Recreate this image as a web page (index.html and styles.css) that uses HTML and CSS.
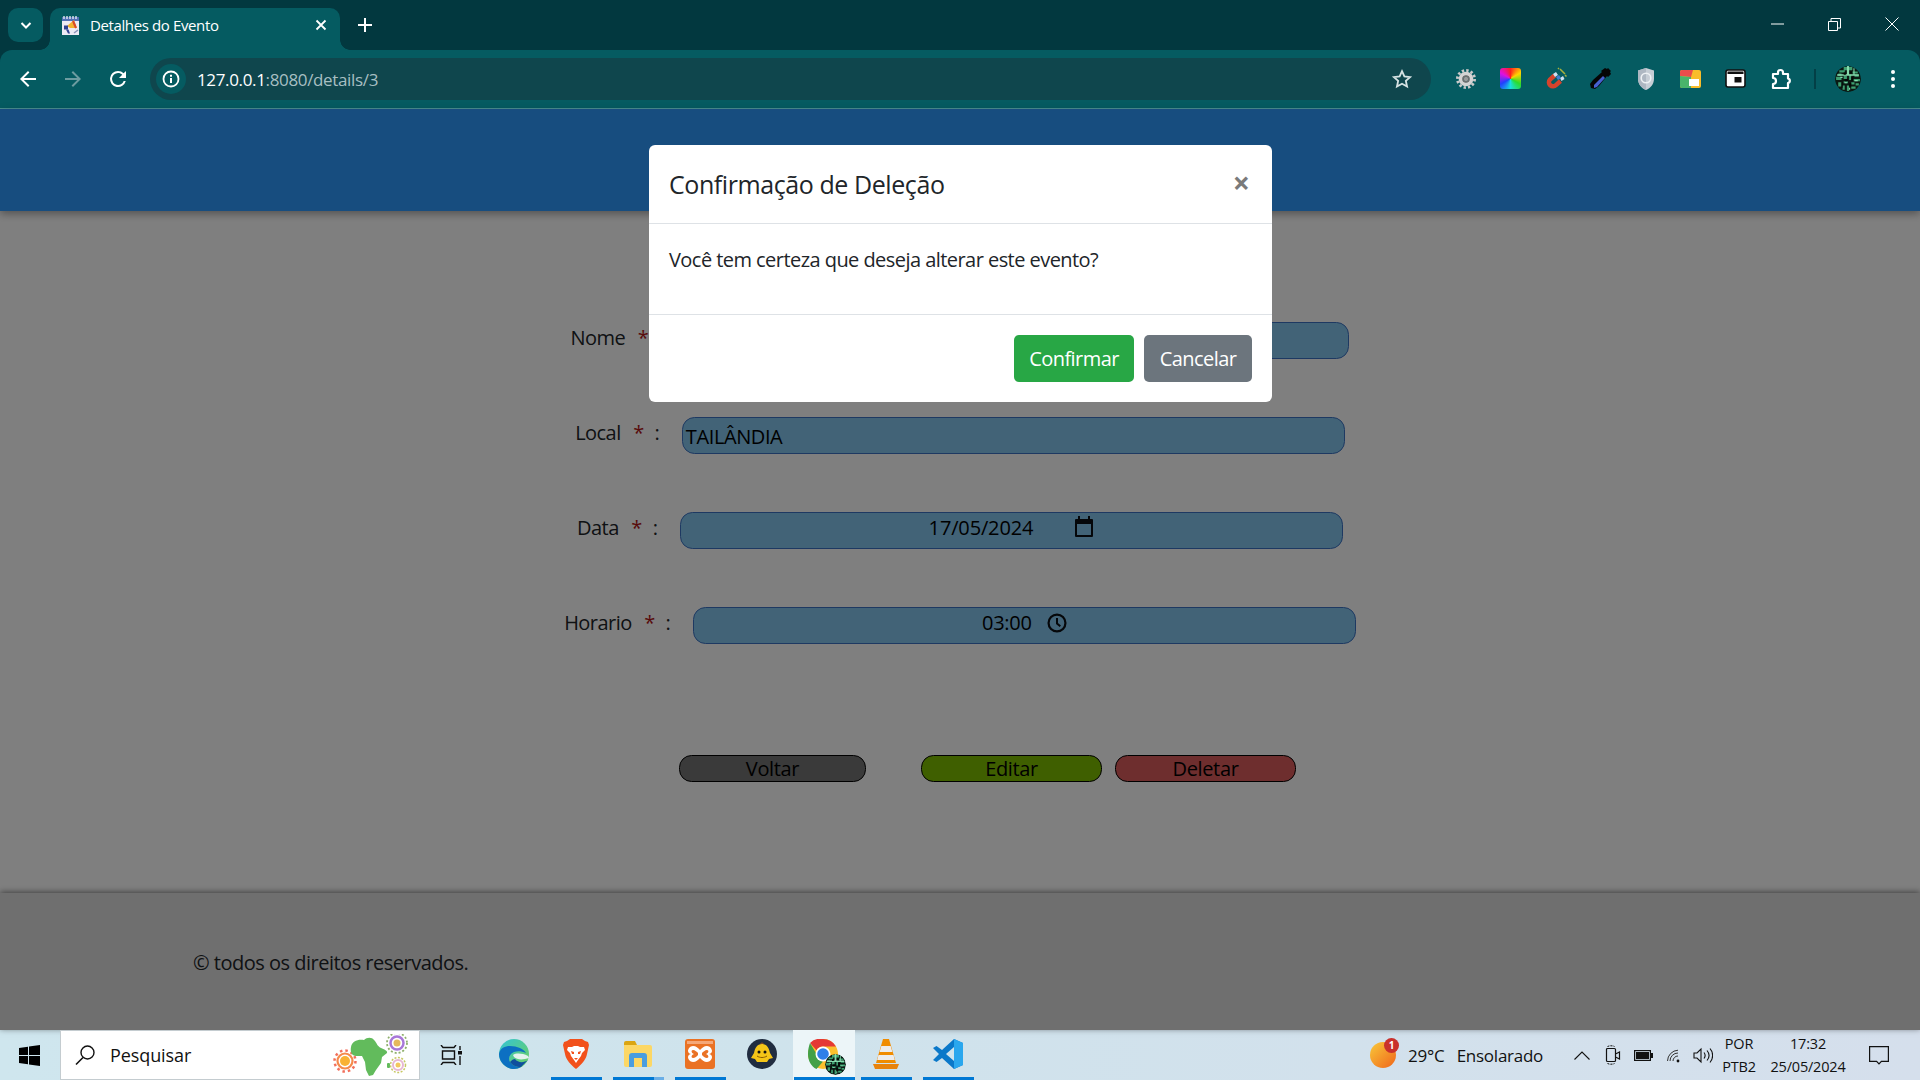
FILE: index.html
```html
<!DOCTYPE html>
<html lang="pt-BR">
<head>
<meta charset="utf-8">
<title>Detalhes do Evento</title>
<link rel="stylesheet" href="styles.css">
</head>
<body>
<svg class="defs" width="0" height="0" aria-hidden="true">
  <symbol id="circuit" viewBox="0 0 24 24">
    <circle cx="12" cy="12" r="12" fill="#0b1a14"/>
    <path d="M8 1h8v3H8zM4 4h5v2H4zM3 7h3v2H3zM16 5h5v2h-5zM1 10h5v3H1zM18 8h4v2h-4zM8 9h3v3H8zM13 8h2v5h-2zM17 12h6v2h-6zM3 15h3v4H3zM8 14h4v2H8zM15 15h3v2h-3zM19 16h3v2h-3zM7 18h2v4H7zM11 18h2v5h-2zM15 19h4v2h-4z" fill="#3e9f70"/>
    <path d="M11 0h2v8h-2zM2 7.500h20v1.500H2zM17 2h1v6h-1zM5 10h2v1H5zM9 15h2v1H9zM18 13h3v1h-3zM13 20h1v2h-1z" fill="#86dcae"/>
    <path d="M8 6h2v2H8zM14 5h2v2h-2zM9 12h3v2H9zM15 10h2v4h-2zM6 15h1v5H6zM13 16h2v3h-2z" fill="#030906"/>
  </symbol>
</svg>
<div class="chrome">
  <div class="strip">
    <div class="tab-list"><svg width="16" height="16" viewBox="0 0 16 16"><path d="M3.500 6 8 10.500 12.500 6" fill="none" stroke="#fff" stroke-width="2"/></svg></div>
    <div class="tab">
      <svg class="favicon" width="20" height="21" viewBox="0 0 20 21">
        <rect x="1" y="3" width="17" height="17" fill="#eceaf4"/>
        <rect x="1" y="2" width="17" height="4" fill="#5270b5"/>
        <path d="M3 1v3M6 1v3M9 1v3M12 1v3M15 1v3" stroke="#fff" stroke-width="1.200"/>
        <path d="M6 11l7-6 3 8-7 0z" fill="#f2b230"/>
        <path d="M12 6l3 7" stroke="#d8482a" stroke-width="2"/>
        <path d="M3 10.500h4v4H3z" fill="#2f4090"/>
        <path d="M5 14.500l2 4h2l-1.500-4z" fill="#2f4090"/>
        <path d="M13 18l4-3" stroke="#8a93b8" stroke-width="1.500"/>
      </svg>
      <span class="tab-title">Detalhes do Evento</span>
      <svg class="tab-close" width="12" height="12" viewBox="0 0 12 12"><path d="M1.500 1.500l9 9M10.500 1.500l-9 9" stroke="#fff" stroke-width="1.800"/></svg>
    </div>
    <svg class="new-tab" width="14" height="14" viewBox="0 0 14 14"><path d="M7 0v14M0 7h14" stroke="#fff" stroke-width="2"/></svg>
    <div class="window-controls">
      <span class="win-btn"><svg width="13" height="2" viewBox="0 0 13 2"><path d="M0 1h13" stroke="#fff"/></svg></span>
      <span class="win-btn"><svg width="13" height="13" viewBox="0 0 13 13"><path d="M.5 3.500h9v9h-9zM3 3.500V.5h9.500V10H9.500" fill="none" stroke="#fff"/></svg></span>
      <span class="win-btn"><svg width="14" height="14" viewBox="0 0 14 14"><path d="M.5.5l13 13M13.500.5l-13 13" stroke="#fff"/></svg></span>
    </div>
  </div>
  <div class="toolbar">
    <span class="nav-btn"><svg width="24" height="24" viewBox="0 0 24 24"><path d="M20 11H7.800l5.600-5.600L12 4l-8 8 8 8 1.400-1.400L7.800 13H20z" fill="#fff"/></svg></span>
    <span class="nav-btn"><svg width="24" height="24" viewBox="0 0 24 24"><path d="M4 11h12.200l-5.600-5.600L12 4l8 8-8 8-1.400-1.400 5.600-5.600H4z" fill="#6d9ca0"/></svg></span>
    <span class="nav-btn"><svg width="24" height="24" viewBox="0 0 24 24"><path d="M17.650 6.350A7.960 7.960 0 0 0 12 4a8 8 0 1 0 7.750 10h-2.080A6 6 0 1 1 12 6c1.660 0 3.140.69 4.220 1.780L13 11h7V4z" fill="#fff"/></svg></span>
    <div class="omnibox">
      <span class="site-info"><svg width="18" height="18" viewBox="0 0 18 18"><circle cx="9" cy="9" r="7.500" fill="none" stroke="#fff" stroke-width="1.800"/><path d="M8 8h2v5H8zM8 4.800h2v2H8z" fill="#fff"/></svg></span>
      <span class="url"><span class="url-host">127.0.0.1</span>:8080/details/3</span>
      <svg class="star" width="22" height="22" viewBox="0 0 24 24"><path d="M12 3.500l2.600 5.700 6.200.7-4.600 4.200 1.300 6.100L12 17.200l-5.500 3 1.300-6.100-4.600-4.200 6.200-.7z" fill="none" stroke="#d5e2e3" stroke-width="2"/></svg>
    </div>
    <div class="extensions">
      <span class="ext"><svg width="20" height="20" viewBox="0 0 20 20"><circle cx="10" cy="10" r="8.600" fill="none" stroke="#c9c9c9" stroke-width="2.800" stroke-dasharray="2.400 2.100"/><circle cx="10" cy="10" r="5.300" fill="none" stroke="#d4d4d4" stroke-width="4"/><circle cx="10" cy="10" r="3" fill="none" stroke="#6f6f6f" stroke-width="1.500"/><circle cx="10" cy="10" r="2.200" fill="#9a9a9a"/></svg></span>
      <span class="ext"><span class="wheel"></span></span>
      <span class="ext"><svg width="22" height="24" viewBox="0 0 22 24"><path d="M9.500 8.500L5 12.500a4 4 0 0 0 6 5.500l4.500-4" fill="none" stroke="#d5432c" stroke-width="4.500"/><path d="M8 7l3-2 2 3-3 2zM15 11l3-2 1.500 3-3 2z" fill="#cfe0f2"/><path d="M11 10l3-2 2 3-3 2z" fill="#3f7fd0"/><path d="M15 2l5 5M13 1l1 1M20 8l1.500 1.500" stroke="#a8b23c" stroke-width="1.500"/></svg></span>
      <span class="ext"><svg width="22" height="24" viewBox="0 0 22 24"><path d="M15 1l2 1 1-1 3 3-1 1 1 2-3 3-1-1-8 10-4 3-4-1-1-4 3-4 9-8-1-1z" fill="#050505"/><path d="M13 9l2 2-8 9-3 1 0-3z" fill="#4660d0"/></svg></span>
      <span class="ext"><svg width="20" height="24" viewBox="0 0 20 24"><path d="M10 1l8 2.500V12c0 5-3.500 9-8 11-4.500-2-8-6-8-11V3.500z" fill="#c7ced6"/><path d="M10 1v22c-4.500-2-8-6-8-11V3.500z" fill="#aeb7c2"/><circle cx="10" cy="11" r="4.800" fill="none" stroke="#eef1f4" stroke-width="1.600"/></svg></span>
      <span class="ext"><svg width="21" height="18" viewBox="0 0 21 18"><rect width="21" height="18" rx="2" fill="#f9bd2a"/><path d="M0 2a2 2 0 0 1 2-2h11l-2 7-11-1z" fill="#ea4c4c"/><path d="M0 6l11 1 0 11H2a2 2 0 0 1-2-2z" fill="#49b36b"/><rect x="9" y="9" width="10" height="7" fill="#fff"/></svg></span>
      <span class="ext"><svg width="21" height="19" viewBox="0 0 21 19"><rect x="1" y="1" width="19" height="17" rx="2" fill="#fff" stroke="#111" stroke-width="1.600"/><rect x="2.500" y="2.500" width="16" height="2.500" fill="#111"/><rect x="9.500" y="8" width="7" height="5.500" fill="#111"/></svg></span>
      <span class="ext puzzle"><svg width="21" height="22" viewBox="0 0 21 22"><path d="M2 6h5V4.500a2.500 2.500 0 0 1 5 0V6h5v4.500a2.300 2.300 0 0 1 0 4.500V20H2v-4a3 3 0 0 0 0-6z" fill="none" stroke="#fff" stroke-width="2.200" stroke-linejoin="round"/></svg></span>
      <span class="toolbar-sep"></span>
      <span class="ext avatar"><svg width="26" height="26"><use href="#circuit"/></svg></span>
      <span class="ext menu"><svg width="6" height="20" viewBox="0 0 6 20"><circle cx="3" cy="3" r="2" fill="#fff"/><circle cx="3" cy="10" r="2" fill="#fff"/><circle cx="3" cy="17" r="2" fill="#fff"/></svg></span>
    </div>
  </div>
</div>

<div class="page">
  <header class="site-header"></header>
  <main class="details">
    <form class="form">
      <div class="row">
        <label class="label">Nome<span class="req">*</span><span class="colon">:</span></label>
        <div class="field"></div>
      </div>
      <div class="row">
        <label class="label">Local<span class="req">*</span><span class="colon">:</span></label>
        <div class="field field-left">TAILÂNDIA</div>
      </div>
      <div class="row">
        <label class="label">Data<span class="req">*</span><span class="colon">:</span></label>
        <div class="field field-date">17/05/2024
          <svg width="20" height="22" viewBox="0 0 20 22"><path d="M4 0h2v3h8V0h2v3h2a1 1 0 0 1 1 1v16a1 1 0 0 1-1 1H2a1 1 0 0 1-1-1V4a1 1 0 0 1 1-1h2z" fill="#0b0f14"/><rect x="3" y="8" width="14" height="11" fill="#84c6ee"/></svg>
        </div>
      </div>
      <div class="row">
        <label class="label">Horario<span class="req">*</span><span class="colon">:</span></label>
        <div class="field field-time">03:00
          <svg width="20" height="20" viewBox="0 0 18 18"><circle cx="9" cy="9" r="7.600" fill="none" stroke="#0b0f14" stroke-width="2"/><path d="M9 4.500V9.500l3 2.500" fill="none" stroke="#0b0f14" stroke-width="1.800"/></svg>
        </div>
      </div>
      <div class="actions">
        <button type="button" class="action back">Voltar</button>
        <button type="button" class="action edit">Editar</button>
        <button type="button" class="action remove">Deletar</button>
      </div>
    </form>
  </main>
  <footer class="site-footer">© todos os direitos reservados.</footer>

  <div class="backdrop"></div>
  <div class="modal">
    <div class="modal-header">
      <h5 class="modal-title">Confirmação de Deleção</h5>
      <span class="modal-close">×</span>
    </div>
    <div class="modal-body"><p>Você tem certeza que deseja alterar este evento?</p></div>
    <div class="modal-footer">
      <button type="button" class="btn btn-ok">Confirmar</button>
      <button type="button" class="btn btn-cancel">Cancelar</button>
    </div>
  </div>
</div>

<div class="taskbar">
  <span class="start"><svg width="21" height="21" viewBox="0 0 21 21"><path d="M0 3l9-1.300V10H0zM10 1.500L21 0v10H10zM0 11h9v8.300L0 18zM10 11h11v10l-11-1.500z" fill="#000"/></svg></span>
  <div class="search">
    <svg class="search-icon" width="22" height="22" viewBox="0 0 22 22"><circle cx="13.500" cy="8.500" r="6.500" fill="none" stroke="#111" stroke-width="1.400"/><path d="M9 13.500L2 20.500" stroke="#111" stroke-width="1.600"/></svg>
    <span class="search-text">Pesquisar</span>
    <svg class="search-art" width="82" height="44" viewBox="0 0 82 44">
      <circle cx="15" cy="27" r="5" fill="#f9b233"/><circle cx="15" cy="27" r="7.500" fill="none" stroke="#f58a4b" stroke-width="2.200"/><circle cx="15" cy="27" r="10.500" fill="none" stroke="#f26f5b" stroke-width="2.500" stroke-dasharray="2.500 3"/>
      <path d="M21 13c1-6 7-8 13-7 3-3 8-3 10 0 3 3 3 6 7 8 3 1 7 3 6 5l-5 4-1 6-5 7-3 5-4 1-3-6-1-8-3-6-6 0c-4 0-6-4-5-9z" fill="#62bb5c"/><rect x="57" y="29" width="3" height="5" rx="1" fill="#62bb5c"/>
      <circle cx="67" cy="9" r="3.500" fill="#e5b95d"/><circle cx="67" cy="9" r="6.500" fill="none" stroke="#a878d8" stroke-width="2.500"/><circle cx="67" cy="9" r="10" fill="none" stroke="#8fb06c" stroke-width="1.800" stroke-dasharray="2 2"/>
      <circle cx="68" cy="31" r="2.500" fill="#f3c75d"/><circle cx="68" cy="31" r="5" fill="none" stroke="#e7b7d4" stroke-width="2"/><circle cx="68" cy="31" r="7.500" fill="none" stroke="#c7c864" stroke-width="1.500" stroke-dasharray="2 1.500"/>
    </svg>
  </div>
  <span class="task-view"><svg width="22" height="20" viewBox="0 0 22 20"><path d="M1 0l2 2.500h11L16 0M1 20l2-2.500h11l2 2.500M2.500 6h12v8h-12zM20 1v4M20 11v9" fill="none" stroke="#111" stroke-width="1.400"/><rect x="18" y="6" width="4" height="3.500" fill="#111"/></svg></span>
  <span class="task"><svg width="30" height="30" viewBox="0 0 30 30"><defs><linearGradient id="edgeA" x1="0" y1="0" x2="1" y2="1"><stop offset="0" stop-color="#33c4d6"/><stop offset="1" stop-color="#6fd05a"/></linearGradient></defs><circle cx="15" cy="15" r="15" fill="url(#edgeA)"/><path d="M0 15C1 9 6 7 11 7c7 0 14 3 16 7-4-2-9-2-12-1-5 2-6 7-4 10 2 3 6 5 11 5-2 1-4 2-7 2C7 30 0 23 0 15z" fill="#0c70c2"/><path d="M11 23c2 3 6 5 11 5l7-7c-4 3-10 3-13-1-2 0-3 1-5 3z" fill="#0f4f9e"/><path d="M14 16c3-2 9-2 15 1l1 2c-6 2-12 2-15-1z" fill="#e4f3ee"/></svg></span>
  <span class="task running"><svg width="26" height="30" viewBox="0 0 26 30"><path d="M7 0h12l3 2 3 1 1 3-2 9c-1 6-6 11-11 15C8 26 3 21 2 15L0 6l1-3 3-1z" fill="#f2511b"/><path d="M5 8h4l2-1h4l2 1h4l1 3-3 3-1 3-3 4-2 3-2-3-3-4-1-3-3-3z" fill="#fff"/><path d="M8 12l3 1v2H9zM18 12l-3 1v2h2zM11 19h4l-2 2z" fill="#f2511b"/></svg></span>
  <span class="task running split"><svg width="28" height="26" viewBox="0 0 28 26"><path d="M0 2a2 2 0 0 1 2-2h9l2 4H0z" fill="#dba511"/><path d="M0 4h26a2 2 0 0 1 2 2v18a2 2 0 0 1-2 2H2a2 2 0 0 1-2-2z" fill="#fcd765"/><path d="M5 26V15a3 3 0 0 1 3-3h12a3 3 0 0 1 3 3v11h-5v-9h-8v9z" fill="#4a9de0"/></svg></span>
  <span class="task running"><svg width="30" height="30" viewBox="0 0 30 30"><rect width="30" height="30" rx="3" fill="#ea7224"/><rect x="2" y="2" width="26" height="3" fill="#f5a878"/><path d="M8 7c3 0 5 2 7 4 2-2 4-4 7-4s5 3 5 5-2 3-3 3c1 0 3 1 3 3s-2 5-5 5-5-2-7-4c-2 2-4 4-7 4s-5-3-5-5 2-3 3-3c-1 0-3-1-3-3s2-5 5-5z" fill="#fff"/><path d="M8 11c2 0 4 2 5 3v2c-1 1-3 3-5 3s-2-3 1-4c-3-1-3-4-1-4zM22 11c-2 0-4 2-5 3v2c1 1 3 3 5 3s2-3-1-4c3-1 3-4 1-4z" fill="#ea7224"/></svg></span>
  <span class="task"><svg width="30" height="30" viewBox="0 0 30 30"><circle cx="15" cy="15" r="15" fill="#212d40"/><path d="M15 5c5 0 7 4 8 9l3 5-4 1-2 3H10l-2-3-4-1 3-5c1-5 3-9 8-9z" fill="#f5c518"/><circle cx="12" cy="13" r="1.500" fill="#111"/><circle cx="18" cy="13" r="1.500" fill="#111"/><path d="M10 17c3 2 7 2 10 0" stroke="#8a5a00" fill="none"/><path d="M13 5c1-2 3-2 4 0z" fill="#7a4a2a"/></svg></span>
  <span class="task active"><span class="chrome-logo"><svg width="30" height="30" viewBox="0 0 30 30"><circle cx="15" cy="15" r="15" fill="#fbc02d"/><path d="M15 0a15 15 0 0 1 13 7.500H15a7.500 7.500 0 0 0-6.500 3.750L2 3.900A15 15 0 0 1 15 0z" fill="#e53935"/><path d="M2 3.900l6.500 11.100a7.500 7.500 0 0 0 6.500 7.500L8.500 30C3 27.500 0 21.500 0 15 0 11 .8 7 2 3.900z" fill="#43a047"/><circle cx="15" cy="15" r="7.500" fill="#fff"/><circle cx="15" cy="15" r="5.800" fill="#2f7fe8"/></svg><svg class="chrome-badge" width="21" height="21"><use href="#circuit"/></svg></span></span>
  <span class="task running"><svg width="26" height="30" viewBox="0 0 26 30"><path d="M10 0h6l7 24H3z" fill="#f08c00"/><path d="M8.300 7h9.400l1.700 6H6.600zM5.500 16h15l1.300 5H4.200z" fill="#ececec"/><path d="M0 25h26l-2 5H2z" fill="#e8830c"/></svg></span>
  <span class="task running"><svg width="30" height="30" viewBox="0 0 30 30"><path d="M21 0l9 4v22l-9 4-12-11-5.500 4L0 21l6-6-6-6 3.500-2L9 11z" fill="#0a78c9"/><path d="M21 0l9 4v22l-9 4V0z" fill="#2aa7ee"/><path d="M21 8l-8 7 8 7z" fill="#d1e5ee"/></svg></span>
  <div class="tray">
    <span class="weather">
      <span class="sun"><span class="sun-badge">1</span></span>
      <span class="temp">29°C</span><span class="cond">Ensolarado</span>
    </span>
    <span class="tray-item chevron"><svg width="16" height="9" viewBox="0 0 16 9"><path d="M.5 8.500L8 1l7.500 7.500" fill="none" stroke="#111" stroke-width="1.100"/></svg></span>
    <span class="tray-item cam"><svg width="16" height="20" viewBox="0 0 16 20"><path d="M1.500 4.500v11a1 1 0 0 0 1 1h7a1 1 0 0 0 1-1v-11a1 1 0 0 0-1-1h-7a1 1 0 0 0-1 1zM10.500 9l4-2v7l-4-2" fill="none" stroke="#111" stroke-width="1.200"/><path d="M2.500 1.500c2-1 5-1 7 0M2.500 18.500c2 1 5 1 7 0" fill="none" stroke="#111" stroke-width="1" stroke-dasharray="2 1"/></svg></span>
    <span class="tray-item batt"><svg width="19" height="11" viewBox="0 0 19 11"><rect x=".6" y=".6" width="15.800" height="9.800" fill="none" stroke="#111" stroke-width="1.200"/><rect x="2" y="2" width="13" height="7" fill="#111"/><rect x="17" y="3" width="2" height="5" fill="#111"/></svg></span>
    <span class="tray-item wifi"><svg width="16" height="16" viewBox="0 0 16 16"><circle cx="13" cy="14" r="1.400" fill="#111"/><path d="M8 14a5 5 0 0 1 5-5M5 14a8 8 0 0 1 8-8M2.500 14A11 11 0 0 1 13 3.200" fill="none" stroke="#333" stroke-width="1"/></svg></span>
    <span class="tray-item spk"><svg width="20" height="17" viewBox="0 0 20 17"><path d="M1 6h3l4-4v13l-4-4H1z" fill="none" stroke="#111" stroke-width="1.100"/><path d="M11 5.500c1.500 2 1.500 4 0 6M14 3.500c2.500 3 2.500 7 0 10M17 1.500c3.500 4 3.500 10 0 14" fill="none" stroke="#111" stroke-width="1.100"/></svg></span>
    <span class="tray-item lang">POR<br>PTB2</span>
    <span class="tray-item clock">17:32<br>25/05/2024</span>
    <span class="tray-item notif"><svg width="20" height="19" viewBox="0 0 20 19"><path d="M.6.6h18.800v14.800h-7l-2.400 2.500-2.400-2.500H.6z" fill="none" stroke="#111" stroke-width="1.200"/></svg></span>
  </div>
</div>
</body>
</html>
```
FILE: styles.css
```css
* { box-sizing: border-box; }
html, body { margin: 0; height: 100%; }
body {
  width: 1920px;
  height: 1080px;
  overflow: hidden;
  display: flex;
  flex-direction: column;
  font-family: "Open Sans", "Noto Sans", sans-serif;
  color: #212529;
  background: #fff;
}
.defs { position: absolute; }

/* Browser chrome */
.chrome { flex: none; height: 109px; background: #02383f; display: flex; flex-direction: column; }
.strip { height: 50px; display: flex; align-items: flex-start; padding: 8px 0 0 8px; }
.tab-list {
  width: 35px; height: 34px; border-radius: 10px; background: #055b61;
  display: flex; align-items: center; justify-content: center;
}
.tab {
  position: relative;
  width: 290px; height: 42px; margin-left: 7px;
  background: #055b61; border-radius: 10px 10px 0 0;
  display: flex; align-items: center; padding: 0 13px 8px 11px;
  color: #fff;
}
.tab::before, .tab::after {
  content: ""; position: absolute; bottom: 0; width: 10px; height: 10px;
}
.tab::before { left: -10px; background: radial-gradient(circle at 0 0, transparent 9.500px, #055b61 10px); }
.tab::after { right: -10px; background: radial-gradient(circle at 100% 0, transparent 9.500px, #055b61 10px); }
.favicon { flex: none; }
.tab-title { margin-left: 9px; font-size: 15px; letter-spacing: -.38px; white-space: nowrap; flex: 1; }
.tab-close { flex: none; }
.new-tab { margin: 10px 0 0 18px; }
.window-controls { margin-left: auto; display: flex; margin-top: -8px; }
.win-btn { width: 57px; height: 48px; display: flex; align-items: center; justify-content: center; }

.toolbar {
  flex: 1;
  background: #055b61;
  border-radius: 12px 12px 0 0;
  border-bottom: 1px solid #4a8f92;
  display: flex; align-items: center;
  padding: 0 0 0 5px;
}
.nav-btn { width: 45px; height: 42px; display: flex; align-items: center; justify-content: center; margin-top: -1px; }
.omnibox {
  width: 1281px; height: 42px; margin: -1px 0 0 10px;
  background: #0f464d; border-radius: 21px;
  display: flex; align-items: center;
  padding: 0 18px 0 6px;
  position: relative;
}
.site-info { width: 30px; height: 30px; border-radius: 50%; background: #055b61; display: flex; align-items: center; justify-content: center; flex: none; }
.url { margin-left: 11px; padding-top: 2px; font-size: 17px; letter-spacing: -.35px; color: #a7bfc2; white-space: nowrap; flex: 1; }
.url-host { color: #fff; }
.extensions { display: flex; align-items: center; margin-left: 12px; margin-top: -1px; }
.ext { width: 45px; height: 30px; display: flex; align-items: center; justify-content: center; }
.puzzle { padding-left: 2px; }
.wheel { width: 21px; height: 21px; border-radius: 3px; background: conic-gradient(#ff1d1d, #ffd400, #2bdc2b, #18e0e0, #2040ff, #e010e0, #ff1d1d); }
.toolbar-sep { width: 2px; height: 20px; background: #033f46; margin: 0 0 0 11px; }
.avatar { margin-left: 9px; }
.avatar svg { border-radius: 50%; }

/* Page */
.page { position: relative; flex: 1; min-height: 0; display: flex; flex-direction: column; background: #fff; }
.site-header { height: 102px; background: #2f9aff; box-shadow: 0 3px 8px rgba(0,0,0,.35); flex: none; z-index: 1; }
.details { flex: 1; padding-top: 111px; min-height: 0; }
.form { display: flex; flex-direction: column; gap: 58px; }
.row { display: flex; justify-content: center; align-items: flex-start; }
.label { font-size: 20px; line-height: 30px; margin: 1px 22.500px 0 0; color: #212529; white-space: nowrap; display: flex; letter-spacing: -.55px; }
.req { color: #b01515; margin-left: 12.500px; }
.colon { margin-left: 11px; }
.field {
  width: 663px; height: 37px;
  background: #84c6ee;
  border: 1px solid #3c72c4;
  border-radius: 12.500px;
  font-size: 20px; line-height: 35px; color: #000;
  letter-spacing: -.4px;
  padding: 0 3px;
}
.field-left { padding-top: 1px; }
.field-date, .field-time { display: flex; align-items: center; justify-content: center; padding-bottom: 6px; letter-spacing: -.15px; }
.field-date svg { margin-left: 41px; margin-bottom: 1px; }
.field-time svg { margin-left: 15px; margin-top: 0; }
.field-time { letter-spacing: -.3px; padding-bottom: 6px; }
.actions { display: flex; margin: 53px 0 0 679px; }
.action {
  height: 27px; border: 1.500px solid #000; border-radius: 12.500px;
  font: 20px/24px "Open Sans", sans-serif; letter-spacing: -.35px; color: #000; padding: 1px 0 0;
}
.back { width: 187px; background: #747474; margin-right: 55px; }
.edit { width: 181px; background: #7ebe00; margin-right: 13px; }
.remove { width: 181px; background: #dc5c5c; }
.site-footer {
  flex: none; height: 137.500px; background: #dedede;
  box-shadow: 0 -1px 6px rgba(0,0,0,.5);
  padding: 3px 0 0 193px; display: flex; align-items: center;
  font-size: 20px; letter-spacing: -.5px; color: #212529;
}
.backdrop { position: absolute; inset: 0; background: rgba(0,0,0,.5); z-index: 2; }
.modal {
  position: absolute; z-index: 3; left: 649px; top: 36px; width: 623px; height: 257px;
  background: #fff; border-radius: 6px; display: flex; flex-direction: column;
}
.modal-header {
  height: 79px; flex: none; border-bottom: 1px solid #dee2e6;
  display: flex; align-items: flex-start; justify-content: space-between; padding: 20px 20px 0;
}
.modal-title { margin: 0; font-size: 25px; line-height: 38px; font-weight: 400; letter-spacing: -.42px; color: #212529; }
.modal-close { font-size: 30px; font-weight: 700; color: #7a7a7a; line-height: 36px; margin-right: 2px; }
.modal-body { height: 91px; flex: none; border-bottom: 1px solid #dee2e6; padding: 21px 20px 0; }
.modal-body p { margin: 0; font-size: 20px; line-height: 30px; letter-spacing: -.55px; }
.modal-footer { flex: 1; display: flex; justify-content: flex-end; align-items: flex-start; gap: 10px; padding: 20px 20px 0; }
.btn { height: 47px; border: 0; border-radius: 5px; font: 20px/47px "Open Sans", sans-serif; letter-spacing: -.55px; color: #fff; padding: 0; }
.btn-ok { width: 120px; background: #28a745; }
.btn-cancel { width: 108px; background: #6c757d; }

/* Taskbar */
.taskbar {
  flex: none; height: 50px; display: flex; align-items: stretch;
  background: linear-gradient(90deg, #cfe6ee, #cfe3ec 40%, #d5dfec);
  color: #111;
}
.start { width: 60px; display: flex; align-items: center; justify-content: center; padding-right: 2px; }
.search {
  width: 360px; background: #fff; border: 1px solid #c4ccd0;
  display: flex; align-items: center; padding-left: 13px; position: relative;
}
.search-text { margin-left: 14px; font-size: 18px; letter-spacing: -.1px; }
.search-art { position: absolute; right: 7px; top: 3px; }
.task-view { width: 63px; display: flex; align-items: center; justify-content: center; padding-right: 1px; }
.task { position: relative; width: 62px; display: flex; align-items: center; justify-content: center; padding-bottom: 3px; }
.running::after, .active::after {
  content: ""; position: absolute; left: 6px; right: 5px; bottom: 0; height: 3px; background: #0078d4;
}
.split::after { background: linear-gradient(90deg, #0078d4 80%, #6aaee6 80%); }
.active { background: #ecf5f8; }
.active::after { left: 1px; right: 0; }
.chrome-logo { position: relative; display: block; width: 30px; height: 30px; margin-left: -2px; }
.chrome-badge { position: absolute; right: -8px; bottom: -6px; border-radius: 50%; }
.tray { margin-left: auto; display: flex; align-items: stretch; padding-right: 18px; }
.weather { width: 197px; display: flex; align-items: center; font-size: 17px; letter-spacing: -.2px; }
.sun { position: relative; width: 26px; height: 26px; border-radius: 50%; background: linear-gradient(135deg, #f8c93a, #f0651a); flex: none; }
.sun-badge {
  position: absolute; right: -3px; top: -4px; width: 15px; height: 15px; border-radius: 50%;
  background: #c9302c; color: #fff; font-size: 10px; line-height: 15px; text-align: center; font-weight: 700;
}
.temp { margin-left: 12px; }
.cond { margin-left: 12px; letter-spacing: -.25px; }
.tray-item { display: flex; align-items: center; justify-content: center; width: 30px; }
.cam { width: 31px; }
.lang, .clock { display: block; text-align: center; font-size: 14.500px; line-height: 23px; padding-top: 2px; letter-spacing: -.2px; white-space: nowrap; }
.lang { width: 42px; }
.clock { width: 96px; }
.notif { width: 46px; }
```
